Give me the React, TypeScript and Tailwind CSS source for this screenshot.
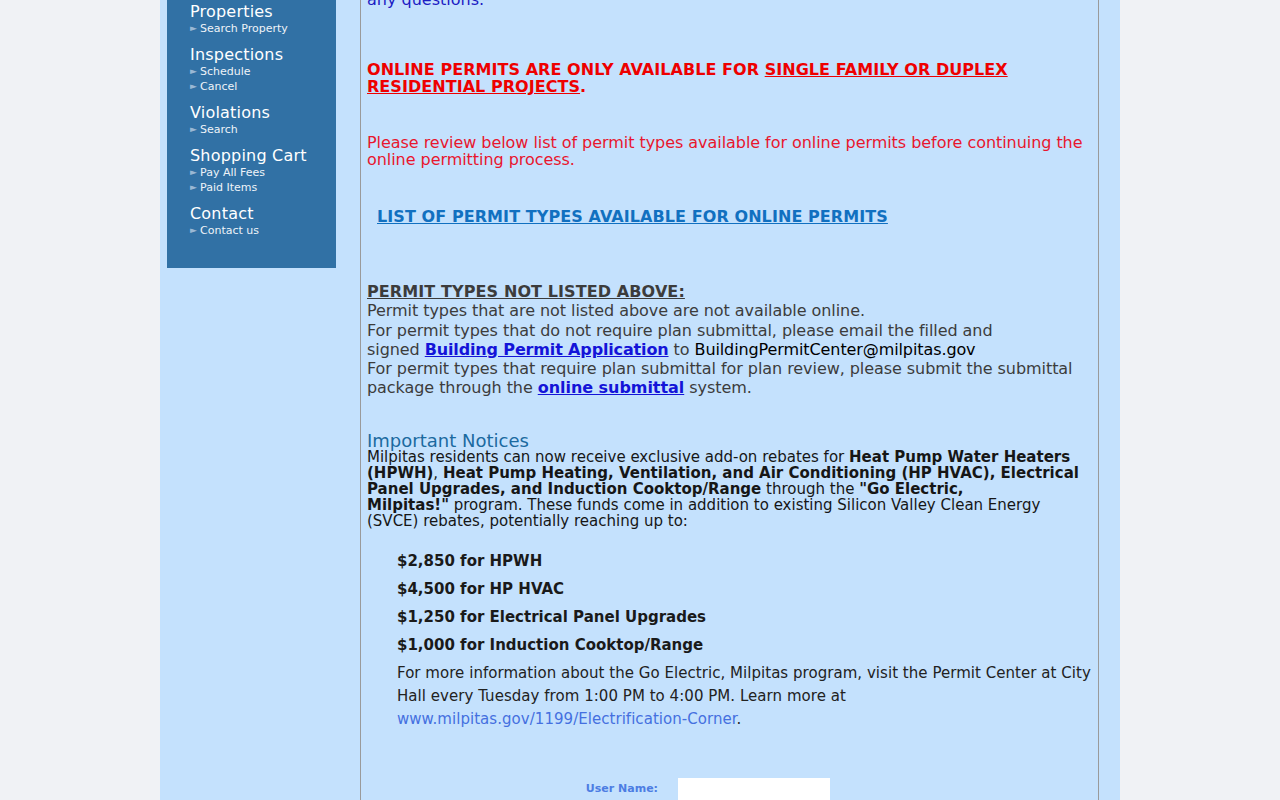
import React from 'react';

const navGroups = [
  { title: 'Properties', items: ['Search Property'] },
  { title: 'Inspections', items: ['Schedule', 'Cancel'] },
  { title: 'Violations', items: ['Search'] },
  { title: 'Shopping Cart', items: ['Pay All Fees', 'Paid Items'] },
  { title: 'Contact', items: ['Contact us'] },
];

const rebates = [
  '$2,850 for HPWH',
  '$4,500 for HP HVAC',
  '$1,250 for Electrical Panel Upgrades',
  '$1,000 for Induction Cooktop/Range',
];

const Sidebar: React.FC = () => (
  <div className="ml-[7px] w-[169px] bg-[#3171a5] pl-[23px] pt-[2px] pb-[30px]">
    {navGroups.map((group, i) => (
      <div key={group.title} className={i > 0 ? 'mt-[9px]' : ''}>
        <div className="text-[16px] leading-[19px] tracking-[0.2px] text-white">{group.title}</div>
        {group.items.map(item => (
          <div key={item} className="flex items-center text-[11px] leading-[15px] text-[#eef3f8]">
            <span className="w-[10px] text-[9px] leading-[15px] text-[#9ab8d4]">&#9658;</span>
            <span>{item}</span>
          </div>
        ))}
      </div>
    ))}
  </div>
);

export default function App() {
  return (
    <div
      className="h-[800px] w-full overflow-hidden bg-[#f0f2f5]"
      style={{ fontFamily: '"DejaVu Sans", Verdana, sans-serif' }}
    >
      <div className="mx-auto flex h-full w-[960px] bg-[#c4e1fd]">
        {/* Left nav */}
        <div className="w-[200px] shrink-0">
          <Sidebar />
        </div>

        {/* Main content */}
        <div className="w-[739px] shrink-0 border-x border-[#9a9a9a] px-[6px]">
          <p className="-mt-[10px] text-[16px] leading-[19px] text-[#1c1cc4]">any questions.</p>

          <p className="mt-[52px] text-[16px] font-bold leading-[17px] tracking-[0.05px] text-[#ee0000]">
            ONLINE PERMITS ARE ONLY AVAILABLE FOR{' '}
            <span className="underline">SINGLE FAMILY OR DUPLEX RESIDENTIAL PROJECTS</span>.
          </p>

          <p className="mt-[39px] text-[16px] leading-[17px] tracking-[-0.05px] text-[#e8162e]">
            Please review below list of permit types available for online permits before continuing the
            online permitting process.
          </p>

          <p className="ml-[10px] mt-[39px] text-[16px] font-bold leading-[19px] tracking-[0.08px]">
            <a href="#" className="text-[#1170c0] underline">
              LIST OF PERMIT TYPES AVAILABLE FOR ONLINE PERMITS
            </a>
          </p>

          <div className="mt-[56px] text-[16px] leading-[19.25px] tracking-[-0.06px] text-[#3c3c3c]">
            <div className="font-bold tracking-[0.1px] underline">PERMIT TYPES NOT LISTED ABOVE:</div>
            <div>Permit types that are not listed above are not available online.</div>
            <div>
              For permit types that do not require plan submittal, please email the filled and
              <br />
              signed{' '}
              <a href="#" className="font-bold tracking-[-0.15px] text-[#1414d8] underline">
                Building Permit Application
              </a>{' '}
              to <span className="tracking-[-0.1px] text-black">BuildingPermitCenter@milpitas.gov</span>
            </div>
            <div>
              For permit types that require plan submittal for plan review, please submit the submittal
              package through the{' '}
              <a href="#" className="font-bold tracking-[-0.05px] text-[#1414d8] underline">
                online submittal
              </a>{' '}
              system.
            </div>
          </div>

          <h3 className="mt-[34px] text-[18px] leading-[17px] text-[#1b6aa0]">Important Notices</h3>
          <p className="text-[15px] leading-[16px] text-[#161616]">
            Milpitas residents can now receive exclusive add-on rebates for{' '}
            <b>Heat Pump Water Heaters (HPWH)</b>,{' '}
            <b>Heat Pump Heating, Ventilation, and Air Conditioning (HP HVAC), Electrical Panel Upgrades, and Induction Cooktop/Range</b>{' '}
            through the{' '}
            <b>
              "Go Electric,
              <br />
              Milpitas!"
            </b>{' '}
            program. These funds come in addition to existing Silicon Valley Clean Energy (SVCE) rebates,
            potentially reaching up to:
          </p>

          <div className="ml-[30px] mt-[21px] text-[15px] leading-[23px] text-[#1a1a1a]">
            {rebates.map(r => (
              <p key={r} className="mb-[5px] font-bold">
                {r}
              </p>
            ))}
            <p className="tracking-[0.04px] text-[#222]">
              For more information about the Go Electric, Milpitas program, visit the Permit Center at City
              Hall every Tuesday from 1:00 PM to 4:00 PM. Learn more at{' '}
              <a href="#" className="text-[#4470e0]">
                www.milpitas.gov/1199/Electrification-Corner
              </a>
              .
            </p>
          </div>

          {/* Login */}
          <div className="mt-[47px] flex items-center gap-[20px]">
            <label className="mt-[2px] w-[291px] text-right text-[11px] font-bold text-[#4d7de3]">User Name:</label>
            <input className="h-[22px] w-[152px] bg-white outline-none" />
          </div>
        </div>
      </div>
    </div>
  );
}
